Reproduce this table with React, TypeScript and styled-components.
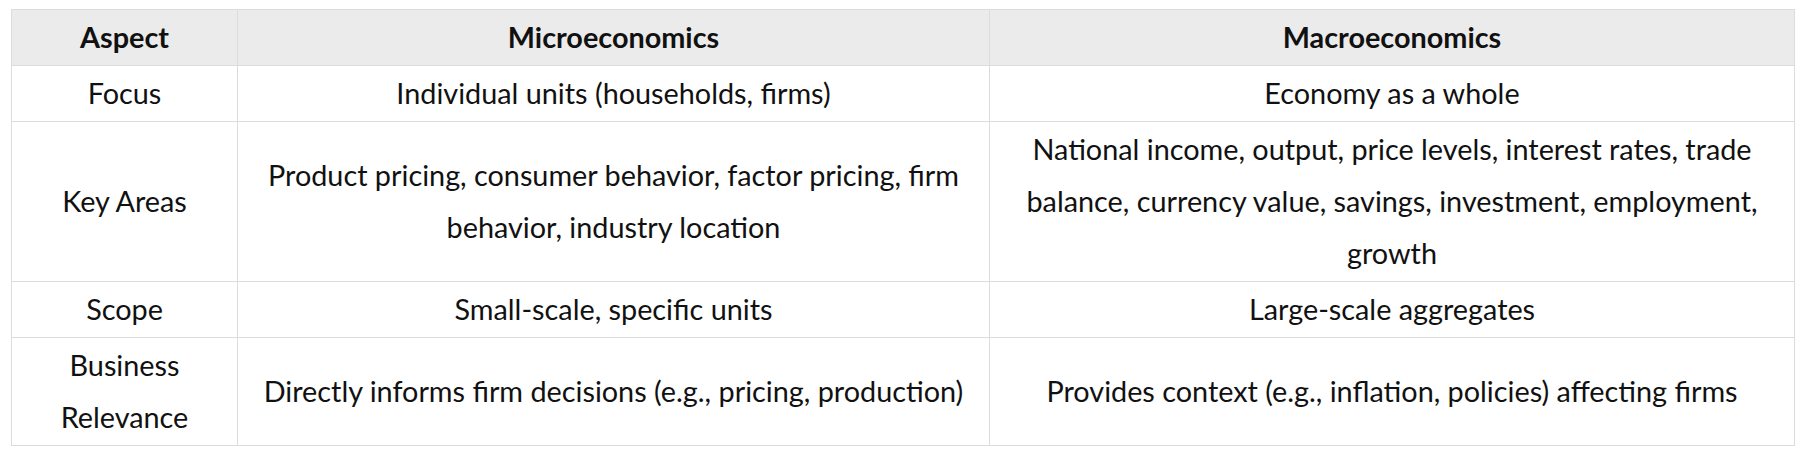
import React from "react";
import styled, { createGlobalStyle } from "styled-components";

const GlobalStyle = createGlobalStyle`
  html, body {
    margin: 0;
    padding: 0;
    background: #ffffff;
  }
  body {
    font-family: Lato, "Noto Sans", "Liberation Sans", sans-serif;
    color: #111111;
  }
`;

const Page = styled.div`
  padding: 9px 10px 0 11px;
`;

const Table = styled.table`
  width: 1783px;
  border-collapse: collapse;
  table-layout: fixed;
  font-size: 28.8px;
  line-height: 52px;
`;

const Col = styled.col<{ $width: number }>`
  width: ${(p) => p.$width}px;
`;

const HeadCell = styled.th`
  background: #ebebeb;
  font-weight: 700;
  text-align: center;
  padding: 1px 14px 2px;
  border: 1px solid #dcdcdc;
`;

const Cell = styled.td`
  text-align: center;
  vertical-align: middle;
  padding: 1px 14px 2px;
  border: 1px solid #dcdcdc;
  font-weight: 400;
`;

const columns = [
  { label: "Aspect", width: 226 },
  { label: "Microeconomics", width: 752 },
  { label: "Macroeconomics", width: 805 },
];

const rows = [
  ["Focus", "Individual units (households, firms)", "Economy as a whole"],
  [
    "Key Areas",
    "Product pricing, consumer behavior, factor pricing, firm behavior, industry location",
    "National income, output, price levels, interest rates, trade balance, currency value, savings, investment, employment, growth",
  ],
  ["Scope", "Small-scale, specific units", "Large-scale aggregates"],
  [
    "Business Relevance",
    "Directly informs firm decisions (e.g., pricing, production)",
    "Provides context (e.g., inflation, policies) affecting firms",
  ],
];

export default function App() {
  return (
    <Page>
      <GlobalStyle />
      <Table>
        <colgroup>
          {columns.map((c) => (
            <Col key={c.label} $width={c.width} />
          ))}
        </colgroup>
        <thead>
          <tr>
            {columns.map((c) => (
              <HeadCell key={c.label}>{c.label}</HeadCell>
            ))}
          </tr>
        </thead>
        <tbody>
          {rows.map((r) => (
            <tr key={r[0]}>
              {r.map((text, i) => (
                <Cell key={i}>{text}</Cell>
              ))}
            </tr>
          ))}
        </tbody>
      </Table>
    </Page>
  );
}
